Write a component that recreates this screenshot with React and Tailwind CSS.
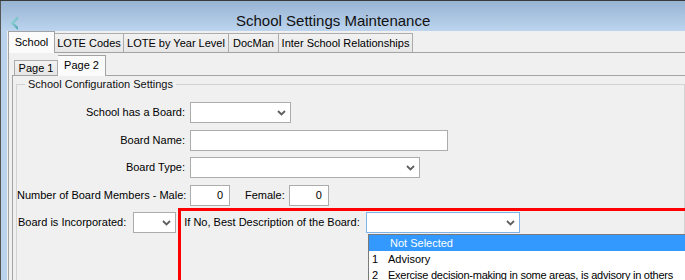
function Chevron() {
  return (
    <svg width="9" height="6" viewBox="0 0 9 6" className="shrink-0">
      <path d="M1 1 L4.5 4.5 L8 1" fill="none" stroke="#5f5f5f" strokeWidth="1.8" />
    </svg>
  );
}

function Select({ className, focused }) {
  return (
    <div
      className={
        "h-[21px] shrink-0 bg-white border flex items-center justify-end pr-[4px] " +
        (focused ? "border-[#7eb4ea] " : "border-[#acacac] ") +
        className
      }
    >
      <Chevron />
    </div>
  );
}

const mainTabs = [
  { label: "School", w: "w-[47px]", active: true },
  { label: "LOTE Codes", w: "w-[69px]" },
  { label: "LOTE by Year Level", w: "w-[105px]" },
  { label: "DocMan", w: "w-[50px]" },
  { label: "Inter School Relationships", w: "w-[134px]" },
];

export default function App() {
  return (
    <div className="relative w-[685px] h-[280px] overflow-hidden flex flex-col bg-[#f0f0f0] border-t border-[#3a3a3a] font-['Liberation_Sans',Arial,sans-serif] text-[11px] text-black leading-none whitespace-nowrap">
      {/* title bar */}
      <div className="h-[30px] shrink-0 flex items-center border-l border-[#555] bg-gradient-to-b from-[#98b4d3] to-[#bcd4ee]">
        <svg width="9" height="14" viewBox="0 0 9 14" className="ml-[9px] mt-[13px]">
          <defs>
            <linearGradient id="bk" x1="0" y1="0" x2="1" y2="1">
              <stop offset="0" stopColor="#b4e6e6" />
              <stop offset="1" stopColor="#4aa3b0" />
            </linearGradient>
          </defs>
          <polygon points="8,0 0,7 8,14 8,11 4,7 8,3" fill="url(#bk)" />
        </svg>
        <span className="ml-[217px] mt-[9px] text-[15px] text-[#111]">School Settings Maintenance</span>
      </div>

      <div className="flex flex-1 min-h-0">
        {/* window frame */}
        <div className="w-[7px] shrink-0 bg-[#bad2ec] border-l border-[#555]" />

        <div className="flex-1 flex flex-col pl-[1px]">
          {/* main tabs */}
          <div className="h-[21px] shrink-0 flex items-end">
            {mainTabs.map((t) =>
              t.active ? (
                <div
                  key={t.label}
                  className={t.w + " h-[22px] relative z-10 -mb-[1px] flex items-center justify-center pb-[1px] bg-[#fbfbfb] border border-b-0 border-[#a3a3a3]"}
                >
                  {t.label}
                </div>
              ) : (
                <div
                  key={t.label}
                  className={t.w + " h-[19px] flex items-center justify-center bg-gradient-to-b from-[#f2f2f2] to-[#e6e6e6] border border-l-0 border-b-0 border-[#acacac]"}
                >
                  {t.label}
                </div>
              )
            )}
          </div>

          {/* main panel */}
          <div className="flex-1 flex flex-col border-l border-t border-[#a3a3a3] pl-[3px]">
            {/* sub tabs */}
            <div className="h-[22px] shrink-0 flex items-end pl-[2px]">
              <div className="w-[44px] h-[15px] flex items-center justify-center bg-gradient-to-b from-[#f2f2f2] to-[#e6e6e6] border border-b-0 border-[#acacac]">
                Page 1
              </div>
              <div className="w-[48px] h-[21px] relative z-10 -mb-[1px] flex items-center justify-center pb-[1px] bg-[#fbfbfb] border border-l-0 border-b-0 border-[#a3a3a3]">
                Page 2
              </div>
            </div>

            {/* sub panel */}
            <div className="flex-1 border-l border-t border-[#a3a3a3] pl-[3px] pt-[3px]">
              <fieldset className="border border-[#d3d3d3] h-[220px] px-0">
                <legend className="ml-[8px] px-[3px] text-[#111]">School Configuration Settings</legend>

                <div className="flex flex-col mt-[12px]">
                  <div className="flex items-center h-[21px]">
                    <span className="w-[168px] shrink-0 text-right">School has a Board:</span>
                    <Select className="w-[101px] ml-[5px]" />
                  </div>
                  <div className="flex items-center h-[21px] mt-[7px]">
                    <span className="w-[168px] shrink-0 text-right">Board Name:</span>
                    <div className="w-[258px] h-[21px] ml-[5px] bg-white border border-[#acacac]" />
                  </div>
                  <div className="flex items-center h-[21px] mt-[6px]">
                    <span className="w-[168px] shrink-0 text-right">Board Type:</span>
                    <Select className="w-[230px] ml-[5px]" />
                  </div>
                  <div className="flex items-center h-[21px] mt-[7px]">
                    <span className="w-[168px] shrink-0 text-right">Number of Board Members - Male:</span>
                    <div className="w-[40px] h-[21px] ml-[5px] bg-white border border-[#acacac] flex items-center justify-end pr-[6px]">0</div>
                    <span className="ml-[15px]">Female:</span>
                    <div className="w-[40px] h-[21px] ml-[4px] bg-white border border-[#acacac] flex items-center justify-end pr-[6px]">0</div>
                  </div>
                  <div className="flex items-center h-[21px] mt-[6px]">
                    <span className="ml-[1px]">Board is Incorporated:</span>
                    <Select className="w-[43px] ml-[7px]" />
                    <span className="ml-[8px]">If No, Best Description of the Board:</span>
                    <Select className="w-[154px] ml-[6px]" focused />
                  </div>
                </div>
              </fieldset>
            </div>
          </div>
        </div>
      </div>

      {/* open dropdown list */}
      <div className="absolute left-[368px] top-[233px] w-[330px] bg-white border border-[#7a7a7a] z-20">
        <div className="h-[16px] flex items-center bg-[#3399ff] text-white pl-[21px]">Not Selected</div>
        <div className="h-[16px] flex items-center pl-[3px]">
          <span className="w-[16px]">1</span>
          <span>Advisory</span>
        </div>
        <div className="h-[16px] flex items-center pl-[3px]">
          <span className="w-[16px]">2</span>
          <span className="tracking-[-0.25px]">Exercise decision-making in some areas, is advisory in others</span>
        </div>
      </div>

      {/* red highlight */}
      <div className="absolute left-[178px] top-[207px] w-[510px] h-[76px] border-[3px] border-[#ff0000] z-30" />
    </div>
  );
}
